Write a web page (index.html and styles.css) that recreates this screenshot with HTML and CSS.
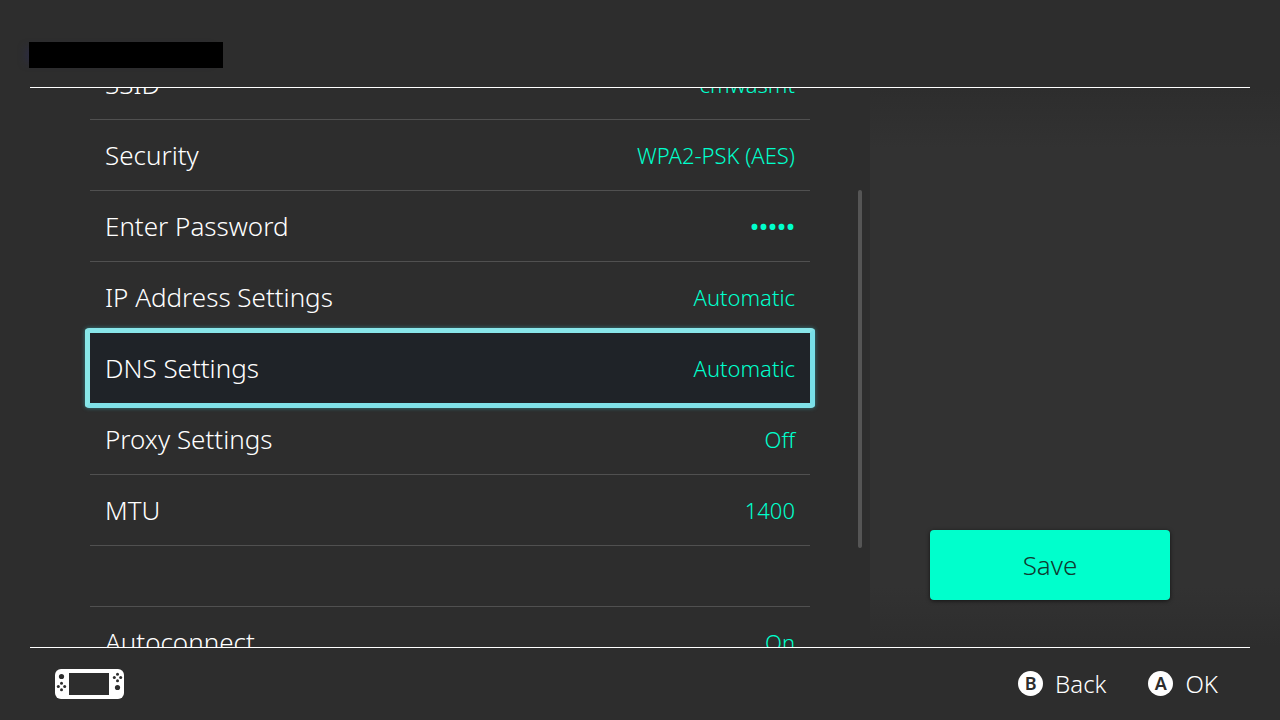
FILE: index.html
```
<!DOCTYPE html>
<html lang="en">

<head>
  <meta charset="UTF-8" />
  <meta name="viewport" content="width=device-width, initial-scale=1.0" />
  <title>Internet Settings</title>
  <link rel="stylesheet" href="styles.css">
</head>

<body>
  <div class="screen">
    <header class="header">
      <div class="title-block"></div>
    </header>

    <main class="main">
      <div class="list-area">
        <ul class="settings">
          <li class="row"><button type="button" class="setting"><span class="label">SSID</span><span class="value">cmwasmt</span></button></li>
          <li class="row"><button type="button" class="setting"><span class="label">Security</span><span class="value">WPA2-PSK (AES)</span></button></li>
          <li class="row"><button type="button" class="setting"><span class="label">Enter Password</span><span class="value password">•••••</span></button></li>
          <li class="row"><button type="button" class="setting"><span class="label">IP Address Settings</span><span class="value">Automatic</span></button></li>
          <li class="row"><button type="button" class="setting selected"><span class="label">DNS Settings</span><span class="value">Automatic</span></button></li>
          <li class="row"><button type="button" class="setting"><span class="label">Proxy Settings</span><span class="value">Off</span></button></li>
          <li class="row"><button type="button" class="setting"><span class="label">MTU</span><span class="value">1400</span></button></li>
          <li class="row spacer"></li>
          <li class="row"><button type="button" class="setting"><span class="label">Autoconnect</span><span class="value">On</span></button></li>
        </ul>
      </div>
      <div class="scrollbar">
        <div class="thumb"></div>
      </div>
      <div class="side">
        <button type="button" class="save">Save</button>
      </div>
    </main>

    <footer class="footer">
      <svg class="console" width="69" height="30" viewBox="0 0 69 30">
        <rect width="69" height="30" rx="6" fill="#fff" />
        <g fill="#2d2d2d">
          <rect x="14" y="4" width="40" height="22" />
          <circle cx="6.5" cy="7.5" r="2.6" />
          <circle cx="6.5" cy="14.3" r="1.5" />
          <circle cx="6.5" cy="20.7" r="1.5" />
          <circle cx="3.3" cy="17.5" r="1.5" />
          <circle cx="9.7" cy="17.5" r="1.5" />
          <circle cx="62.5" cy="5.3" r="1.5" />
          <circle cx="62.5" cy="11.7" r="1.5" />
          <circle cx="59.3" cy="8.5" r="1.5" />
          <circle cx="65.7" cy="8.5" r="1.5" />
          <circle cx="62.5" cy="18.5" r="2.6" />
        </g>
      </svg>
      <div class="actions">
        <button type="button" class="action"><span class="key">B</span>Back</button>
        <button type="button" class="action"><span class="key">A</span>OK</button>
      </div>
    </footer>
  </div>
</body>

</html>
```
FILE: styles.css
```
* {
  box-sizing: border-box;
}

body {
  margin: 0;
  background: #2d2d2d;
  color: #fff;
  font-family: "Noto Sans", "Open Sans", sans-serif;
  font-weight: 300;
}

button {
  padding: 0;
  border: none;
  background: none;
  color: inherit;
  font: inherit;
  cursor: pointer;
}

.screen {
  display: flex;
  flex-direction: column;
  height: 100vh;
}

.header {
  display: flex;
  align-items: flex-end;
  height: 88px;
  margin: 0 30px;
  padding-bottom: 19px;
  border-bottom: 1px solid #fff;
}

.title-block {
  width: 194px;
  height: 26px;
  margin-left: -1px;
  background: #000;
  box-shadow: -8px 0 8px -6px #2c2c4a;
}

.main {
  display: flex;
  flex: 1;
  min-height: 0;
}

.list-area {
  flex: 1;
  padding: 0 48px 0 90px;
  overflow: hidden;
}

/* scrolled down past the top of the list */
.settings {
  list-style: none;
  margin: -39px 0 0;
  padding: 0;
}

.row {
  border-bottom: 1px solid #505050;
}

.spacer {
  height: 61px;
}

.setting {
  position: relative;
  display: flex;
  align-items: center;
  justify-content: space-between;
  width: 100%;
  height: 70px;
  padding: 0 15px;
}

.label {
  font-size: 26px;
}

.value {
  color: #00ffcc;
  font-size: 22px;
}

.password {
  font-size: 24px;
  font-weight: 500;
}

.selected {
  background: #1f2328;
}

.selected::after {
  content: "";
  position: absolute;
  inset: -5px;
  border: 5px solid;
  border-color: #88e5e9 #78dfe8 #80e1e8 #88e7e8;
  border-radius: 4px;
  box-shadow: 0 0 4px rgba(60, 200, 210, 0.5);
}

.scrollbar {
  width: 12px;
}

.thumb {
  width: 4px;
  height: 64%;
  margin-top: 102px;
  border-radius: 2px;
  background: #555;
}

.side {
  display: flex;
  align-items: flex-end;
  width: 410px;
  padding: 0 60px 47px;
  background: linear-gradient(#2d2d2d, #323232 60px, #323232 calc(100% - 60px), #2d2d2d);
}

.save {
  width: 240px;
  height: 70px;
  border-radius: 4px;
  background: #00ffcc;
  box-shadow: 0 1px 4px rgba(0, 0, 0, 0.6);
  color: #0f3a30;
  font-size: 26px;
}

.footer {
  display: flex;
  align-items: center;
  justify-content: space-between;
  height: 73px;
  margin: 0 30px;
  padding: 0 32px 0 25px;
  border-top: 1px solid #fff;
}

.actions {
  display: flex;
  gap: 42px;
  padding-bottom: 2px;
}

.action {
  display: flex;
  align-items: center;
  gap: 12px;
  font-size: 24px;
}

.key {
  width: 25px;
  height: 25px;
  border-radius: 50%;
  background: #fff;
  color: #2d2d2d;
  font-size: 18px;
  font-weight: 600;
  line-height: 25px;
  text-align: center;
}
```
